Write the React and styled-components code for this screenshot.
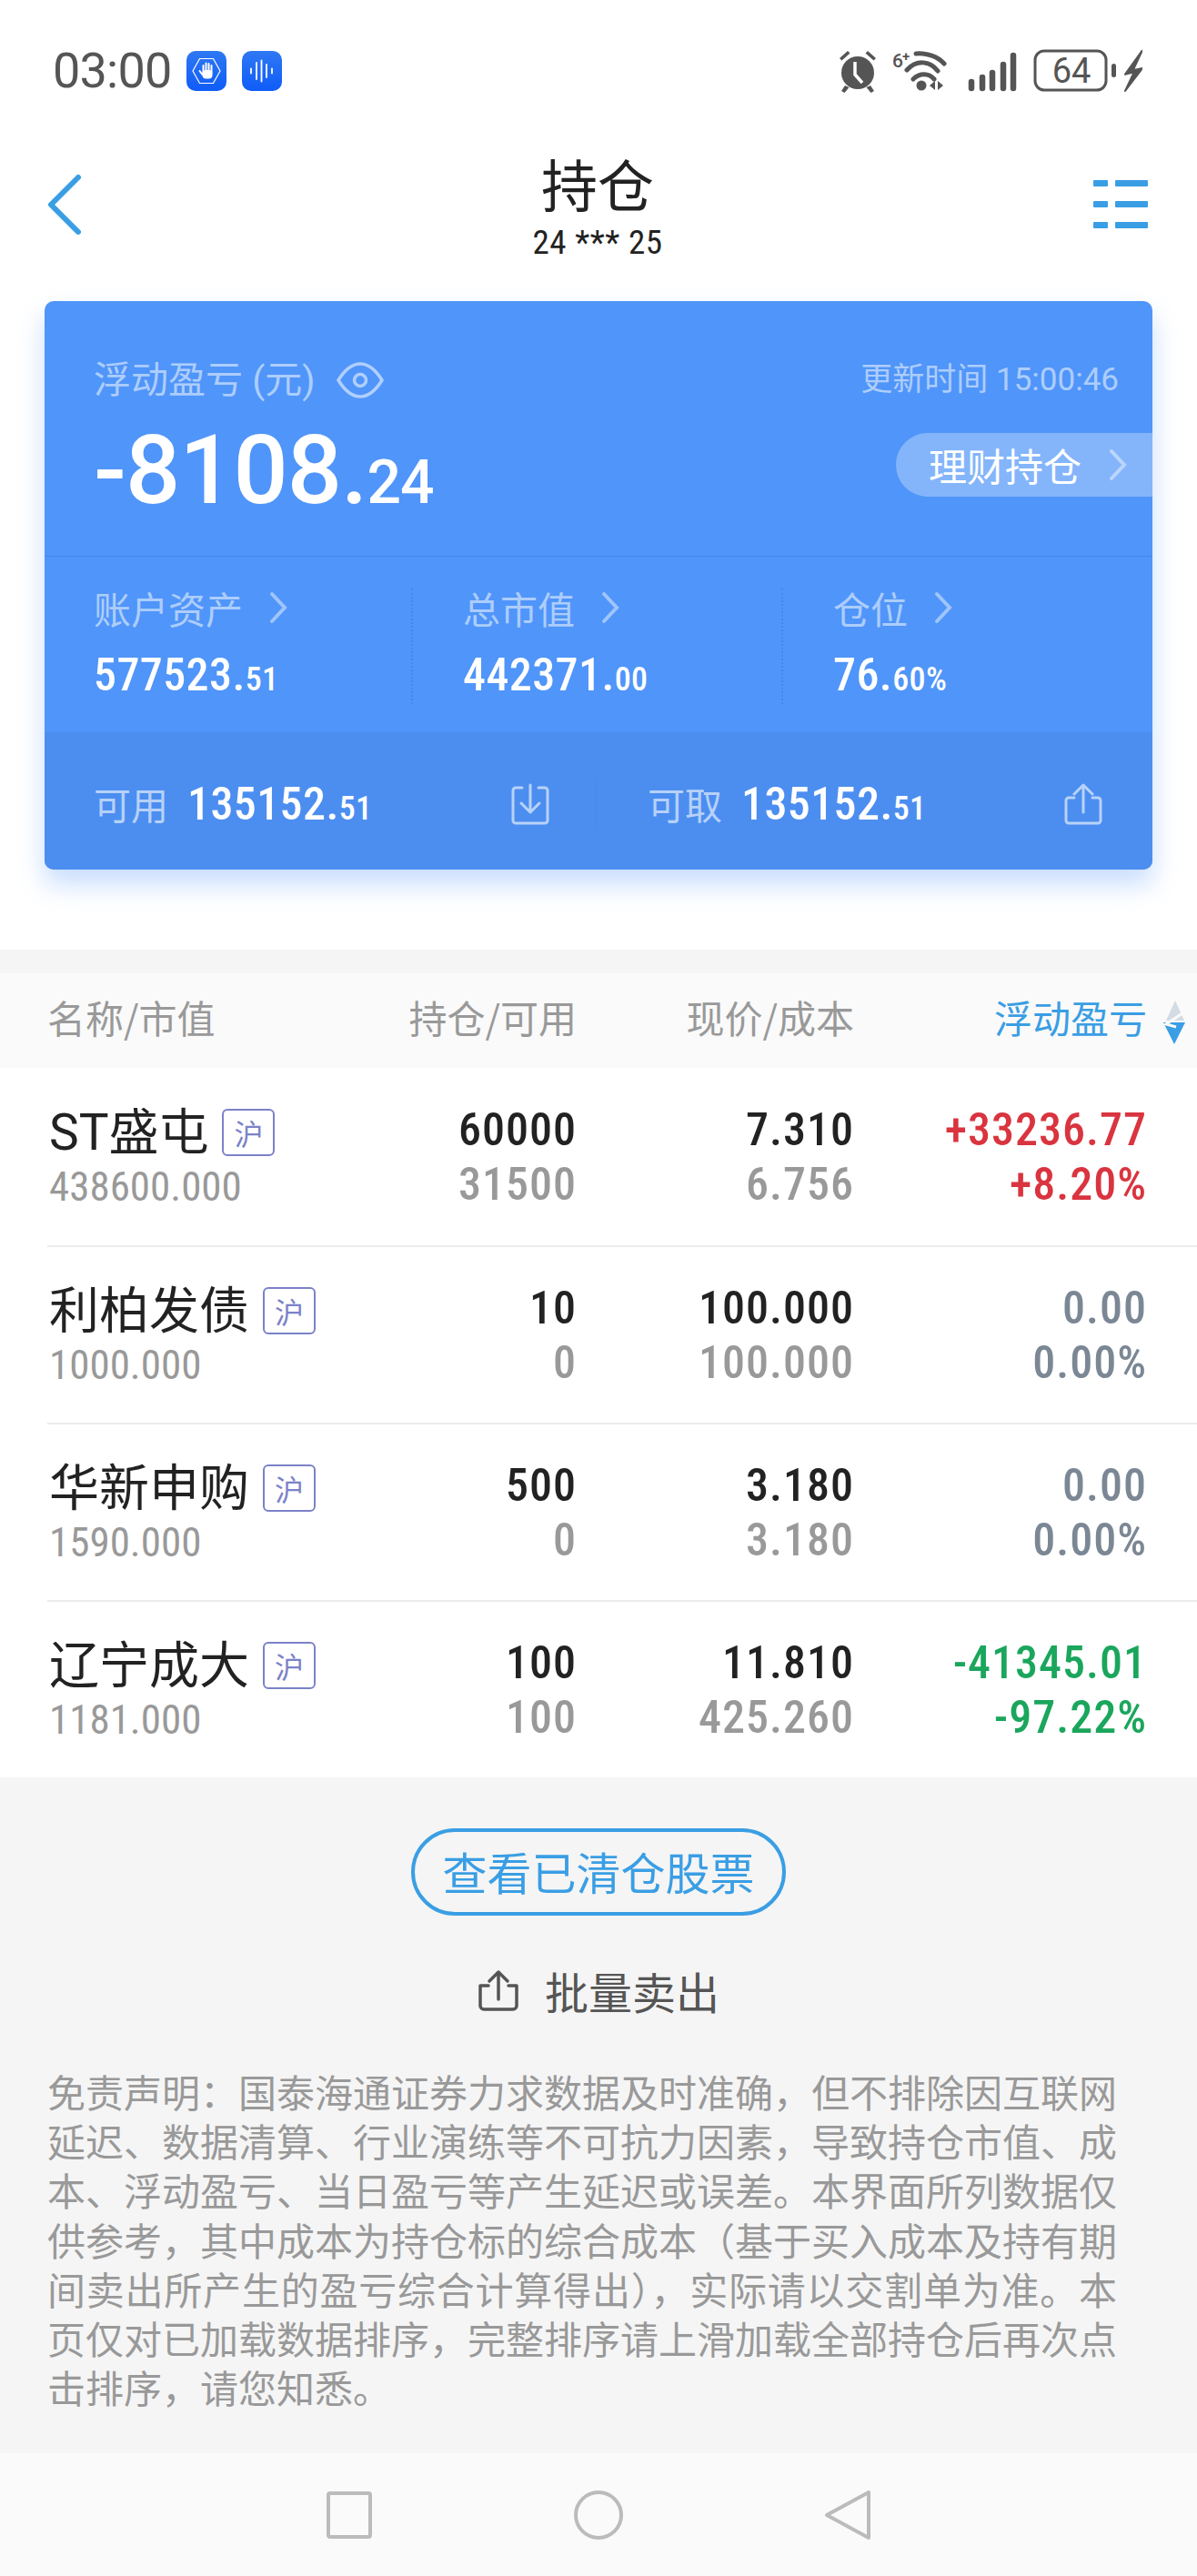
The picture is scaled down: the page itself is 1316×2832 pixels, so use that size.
import React from 'react';
import styled, { createGlobalStyle } from 'styled-components';

const CJK = '"Noto Sans CJK SC", sans-serif';
const NUM = 'Roboto, "Noto Sans CJK SC", sans-serif';
const BLUE = '#3a9ee4';

const Global = createGlobalStyle`
  html, body { margin: 0; padding: 0; background: #fff; }
  * { box-sizing: border-box; }
  body { font-family: ${CJK}; }
`;

const Page = styled.div`
  width: 1316px;
  height: 2832px;
  display: flex;
  flex-direction: column;
  background: #fff;
  overflow: hidden;
`;

const StatusBar = styled.div`
  height: 156px;
  padding: 0 58px 0 58px;
  display: flex;
  align-items: center;
  justify-content: space-between;
`;
const StatusLeft = styled.div`
  display: flex;
  align-items: center;
  gap: 17px;
`;
const Clock = styled.span`
  font: 400 54px/1 ${NUM};
  letter-spacing: -0.8px;
  color: #555;
`;
const AppBadge = styled.svg`
  width: 44px;
  height: 44px;
  display: block;
`;
const StatusRight = styled.div`
  display: flex;
  align-items: center;
  margin-right: 2px;
`;
const StatusIcons = styled.svg`
  width: 340px;
  height: 62px;
  display: block;
`;

const NavBar = styled.div`
  height: 175px;
  padding: 0 54px 0 52px;
  display: grid;
  grid-template-columns: 120px 1fr 120px;
`;
const BackIcon = styled.svg`
  width: 40px;
  height: 68px;
  margin-top: 35px;
`;
const MenuIcon = styled.svg`
  width: 60px;
  height: 54px;
  margin-top: 42px;
  justify-self: end;
`;
const TitleBlock = styled.div`
  display: flex;
  flex-direction: column;
  align-items: center;
  padding-top: 10px;
`;
const Title = styled.div`
  font: 400 62px/70px ${CJK};
  color: #222;
`;
const SubTitle = styled.div`
  font: 400 37px/36px ${NUM};
  font-stretch: 85%;
  letter-spacing: 0.6px;
  color: #222;
  margin-top: 13px;
`;

const Card = styled.section`
  margin: 0 49px;
  height: 625px;
  border-radius: 10px;
  background: #5095f9;
  box-shadow: 0 16px 28px rgba(80, 148, 248, 0.32);
  display: flex;
  flex-direction: column;
  overflow: hidden;
`;
const CardTop = styled.div`
  flex: none;
  height: 281px;
  padding: 60px 0 0 54px;
  border-bottom: 1px solid rgba(60, 120, 225, 0.55);
  display: flex;
  flex-direction: column;
`;
const CardHead = styled.div`
  display: flex;
  align-items: center;
  justify-content: space-between;
  height: 54px;
  padding-right: 37px;
`;
const CardLabel = styled.div`
  display: flex;
  align-items: center;
  gap: 24px;
  font: 400 41px/54px ${NUM};
  color: rgba(255, 255, 255, 0.55);
`;
const UpdatedAt = styled.div`
  font: 400 35px/54px ${NUM};
  color: rgba(255, 255, 255, 0.55);
`;
const Balance = styled.div`
  display: flex;
  align-items: center;
  justify-content: space-between;
  margin-top: 22px;
`;
const BalanceValue = styled.div`
  font: 500 106px/100px ${NUM};
  color: #fff;
  letter-spacing: -1px;
  span { font-size: 66px; font-weight: 500; letter-spacing: -1px; }
`;
const Pill = styled.div`
  width: 282px;
  height: 70px;
  margin-top: -26px;
  border-radius: 35px 0 0 35px;
  background: rgba(255, 255, 255, 0.3);
  display: flex;
  align-items: center;
  gap: 30px;
  padding-left: 36px;
  font: 400 42px/1 ${CJK};
  color: #fff;
`;

const Stats = styled.div`
  flex: 1;
  min-height: 0;
  display: grid;
  grid-template-columns: 405px 407px 1fr;
  padding: 35px 0 36px 0;
`;
const Stat = styled.div`
  padding-left: ${p => (p.$first ? '54px' : '55px')};
  border-right: ${p => (p.$last ? 'none' : '2px dotted rgba(60, 120, 225, 0.5)')};
  display: flex;
  flex-direction: column;
`;
const StatLabel = styled.div`
  margin-top: -4px;
  display: flex;
  align-items: center;
  gap: 29px;
  font: 400 41px/50px ${CJK};
  color: rgba(255, 255, 255, 0.55);
`;
const StatValue = styled.div`
  margin-top: 22px;
  font: 500 50px/54px ${NUM};
  font-stretch: 87%;
  letter-spacing: 0.4px;
  color: #fff;
  span { font-size: 36px; }
`;

const CardFoot = styled.div`
  flex: none;
  height: 151px;
  background: #4c8ef0;
  display: grid;
  grid-template-columns: 607px 1fr;
  align-items: center;
`;
const FootCell = styled.div`
  height: 60px;
  margin-top: 6px;
  padding: 0 ${p => (p.$right ? '54px' : '50px')} 0 ${p => (p.$right ? '56px' : '54px')};
  display: flex;
  align-items: center;
  border-right: ${p => (p.$right ? 'none' : '1px solid rgba(70, 130, 230, 0.6)')};
`;
const FootLabel = styled.span`
  font: 400 41px/1 ${CJK};
  color: rgba(255, 255, 255, 0.6);
  margin-right: 21px;
`;
const FootValue = styled.span`
  font: 500 50px/1 ${NUM};
  font-stretch: 87%;
  letter-spacing: 0.4px;
  color: #fff;
  flex: 1;
  span { font-size: 36px; }
`;
const FootIcon = styled.svg`
  width: 44px;
  height: 46px;
  display: block;
`;

const Strip = styled.div`
  height: 26px;
  margin-top: 88px;
  background: #f5f5f5;
`;

const TableHead = styled.div`
  height: 104px;
  background: #fafafa;
  padding: 0 55px 8px 52px;
  display: grid;
  grid-template-columns: 382px 200px 305px 322px;
  align-items: center;
  position: relative;
`;
const HeadCell = styled.div`
  font: 400 42px/1 ${CJK};
  color: ${p => (p.$active ? BLUE : '#999')};
  text-align: ${p => (p.$left ? 'left' : 'right')};
`;
const SortIcon = styled.svg`
  position: absolute;
  left: 1276px;
  top: 30px;
  width: 30px;
  height: 48px;
`;

const Rows = styled.div`
  display: flex;
  flex-direction: column;
`;
const Row = styled.div`
  height: 195px;
  margin-left: 52px;
  padding-right: 55px;
  border-top: ${p => (p.$first ? 'none' : '2px solid #ececec')};
  display: grid;
  grid-template-columns: 382px 200px 305px 322px;
  align-content: center;
`;
const NameCell = styled.div`
  display: flex;
  flex-direction: column;
  padding: 6px 0 0 2px;
`;
const NameLine = styled.div`
  display: flex;
  align-items: center;
  gap: 15px;
  height: 60px;
`;
const StockName = styled.span`
  font: 400 55px/60px ${NUM};
  color: #222;
`;
const MarketTag = styled.span`
  width: 58px;
  height: 52px;
  border: 2px solid #7b82c8;
  border-radius: 6px;
  color: #7b82c8;
  font: 400 32px/48px ${CJK};
  text-align: center;
`;
const MarketValue = styled.span`
  font: 400 45px/60px ${NUM};
  font-stretch: 84%;
  color: #999;
`;
const NumCell = styled.div`
  display: flex;
  flex-direction: column;
  padding-top: 3px;
  text-align: right;
`;
const Top = styled.span`
  font: 470 50px/60px ${NUM};
  font-stretch: 87%;
  letter-spacing: 1px;
  color: ${p => p.$color || '#222'};
`;
const Bottom = styled.span`
  font: 470 50px/60px ${NUM};
  font-stretch: 87%;
  letter-spacing: 1px;
  color: ${p => p.$color || '#999'};
`;

const Footer = styled.div`
  flex: 1;
  background: #f5f5f5;
  display: flex;
  flex-direction: column;
  align-items: center;
  padding-top: 56px;
`;
const OutlineButton = styled.div`
  width: 412px;
  height: 96px;
  padding-bottom: 4px;
  border: 4px solid ${BLUE};
  border-radius: 48px;
  display: flex;
  align-items: center;
  justify-content: center;
  font: 400 49px/1 ${CJK};
  color: ${BLUE};
`;
const BatchSell = styled.div`
  margin-top: 47px;
  display: flex;
  align-items: center;
  gap: 28px;
  font: 400 48px/70px ${CJK};
  color: #555;
`;
const BatchIcon = styled.svg`
  width: 46px;
  height: 46px;
`;
const Disclaimer = styled.p`
  margin: 49px 0 0 52px;
  align-self: flex-start;
  width: 1176px;
  font: 400 42px/54.2px ${CJK};
  color: #999;
  text-align: justify;
`;

const SystemBar = styled.div`
  height: 135px;
  background: #fafafa;
  display: flex;
  align-items: center;
  justify-content: center;
  gap: 220px;
`;
const SysIcon = styled.svg`
  width: 54px;
  height: 56px;
  display: block;
`;

/* Status bar drawings */
const HandBadge = () => (
  <AppBadge viewBox="0 0 44 44">
    <defs>
      <linearGradient id="badgeFill" x1="0" y1="0" x2="0" y2="1">
        <stop offset="0" stopColor="#2f78f4" /><stop offset="1" stopColor="#0f5cf8" />
      </linearGradient>
    </defs>
    <rect width="44" height="44" rx="10" fill="url(#badgeFill)" />
    <path d="M14.500 8.500h15L37 22l-7.500 13.500h-15L7 22z" fill="none" stroke="#fff" strokeWidth="1.200" />
    <g stroke="#fff" strokeWidth="2" strokeLinecap="round">
      <path d="M18.500 16v8M21.500 13.500v9M24.500 14v9M27.500 16v8M14.500 22l3 4" />
    </g>
    <rect x="17.500" y="21" width="11" height="9.500" rx="4" fill="#fff" />
  </AppBadge>
);

const WaveBadge = () => (
  <AppBadge viewBox="0 0 44 44">
    <rect width="44" height="44" rx="10" fill="url(#badgeFill)" />
    <g stroke="#fff" strokeWidth="1.800" strokeLinecap="round">
      <path d="M10 19.500v5M16 13v18M21.500 10.500v23M27 15v14M33 19.500v5" />
    </g>
  </AppBadge>
);

const TrayIcons = () => (
  <StatusIcons viewBox="0 -6 340 62">
    <g fill="#555">
      <circle cx="27" cy="27" r="18" />
      <path d="M7 11l9-8 2.500 2.500-9 8zM47 11l-9-8-2.500 2.500 9 8zM13 41l-4 6 3.500 2 5-6zM41 41l4 6-3.500 2-5-6z" />
    </g>
    <path d="M24 15v14l8 9" stroke="#fff" strokeWidth="3.500" fill="none" />
    <text x="65" y="21" fontFamily="Roboto, sans-serif" fontSize="21" fontWeight="500" fill="#555">6</text>
    <text x="76" y="14" fontFamily="Roboto, sans-serif" fontSize="15" fontWeight="700" fill="#555">+</text>
    <g fill="none" stroke="#555" strokeWidth="5" strokeLinecap="round">
      <path d="M91 6c12-1 24 3 31 11" />
      <path d="M81 24c10-11 25-11 34 1" />
      <path d="M88 34c7-7 17-7 23 0" />
    </g>
    <circle cx="97" cy="41" r="5.500" fill="#555" />
    <path d="M106 41l6-5v10zM115 36v10l6-5z" fill="#555" />
    <g stroke="#555" strokeWidth="6.500" strokeLinecap="round">
      <path d="M152 37v7M164 32v12M175 27v17M187 18v26M198 8v36" />
    </g>
    <rect x="222" y="3" width="78" height="43" rx="10" fill="none" stroke="#555" strokeWidth="3" />
    <text x="262" y="38" textAnchor="middle" fontFamily="Roboto, sans-serif" fontSize="38" fill="#555">64</text>
    <rect x="306" y="17" width="5" height="15" rx="2.500" fill="#555" />
    <path d="M339.700 2.700L321 28.700l9.700-2.400L321 47l19-25-10.300 2.300z" fill="#555" stroke="#555" strokeWidth="2" strokeLinejoin="round" />
  </StatusIcons>
);

const Eye = () => (
  <svg width="52" height="40" viewBox="0 0 52 40" fill="none" stroke="rgba(255,255,255,.55)" strokeWidth="3.500">
    <path d="M2 20C10 7 18 2 26 2s16 5 24 18c-8 13-16 18-24 18S10 33 2 20z" />
    <circle cx="26" cy="20" r="6.500" />
  </svg>
);

const Chevron = ({ opacity = 0.45 }) => (
  <svg width="20" height="36" viewBox="0 0 20 36" fill="none" stroke={`rgba(255,255,255,${opacity})`} strokeWidth="4" strokeLinecap="round">
    <path d="M3 3l14 15L3 33" />
  </svg>
);

const DownloadGlyph = () => (
  <FootIcon viewBox="0 0 44 46" fill="none" stroke="rgba(255,255,255,.6)" strokeWidth="3" strokeLinecap="round" strokeLinejoin="round">
    <path d="M13 5H6a3 3 0 0 0-3 3v33a3 3 0 0 0 3 3h32a3 3 0 0 0 3-3V8a3 3 0 0 0-3-3h-7" />
    <path d="M22 2v29M12 22l10 10 10-10" />
  </FootIcon>
);

const UploadGlyph = () => (
  <FootIcon viewBox="0 0 44 46" fill="none" stroke="rgba(255,255,255,.6)" strokeWidth="3" strokeLinecap="round" strokeLinejoin="round">
    <path d="M12 16H6a3 3 0 0 0-3 3v22a3 3 0 0 0 3 3h32a3 3 0 0 0 3-3V19a3 3 0 0 0-3-3h-6" />
    <path d="M22 32V3M12 12l10-10 10 10" />
  </FootIcon>
);

const holdings = [
  { name: 'ST盛屯', mv: '438600.000', qty: '60000', free: '31500', price: '7.310', cost: '6.756', pl: '+33236.77', pct: '+8.20%', color: '#d9343f' },
  { name: '利柏发债', mv: '1000.000', qty: '10', free: '0', price: '100.000', cost: '100.000', pl: '0.00', pct: '0.00%', color: '#7b8794' },
  { name: '华新申购', mv: '1590.000', qty: '500', free: '0', price: '3.180', cost: '3.180', pl: '0.00', pct: '0.00%', color: '#7b8794' },
  { name: '辽宁成大', mv: '1181.000', qty: '100', free: '100', price: '11.810', cost: '425.260', pl: '-41345.01', pct: '-97.22%', color: '#1aa65c' },
];

const stats = [
  { label: '账户资产', whole: '577523.', cents: '51' },
  { label: '总市值', whole: '442371.', cents: '00' },
  { label: '仓位', whole: '76.', cents: '60%' },
];

const NOTICE = '免责声明\uFF1A国泰海通证券力求数据及时准确\uFF0C但不排除因互联网延迟、数据清算、行业演练等不可抗力因素\uFF0C导致持仓市值、成本、浮动盈亏、当日盈亏等产生延迟或误差。本界面所列数据仅供参考\uFF0C其中成本为持仓标的综合成本\uFF08基于买入成本及持有期间卖出所产生的盈亏综合计算得出\uFF09\uFF0C实际请以交割单为准。本页仅对已加载数据排序\uFF0C完整排序请上滑加载全部持仓后再次点击排序\uFF0C请您知悉。';

export default function App() {
  return (
    <Page>
      <Global />
      <StatusBar>
        <StatusLeft>
          <Clock>03:00</Clock>
          <HandBadge />
          <WaveBadge />
        </StatusLeft>
        <StatusRight><TrayIcons /></StatusRight>
      </StatusBar>

      <NavBar>
        <BackIcon viewBox="0 0 40 68" fill="none" stroke={BLUE} strokeWidth="6" strokeLinecap="round" strokeLinejoin="round">
          <path d="M34 4L4 34l30 30" />
        </BackIcon>
        <TitleBlock>
          <Title>持仓</Title>
          <SubTitle>24 *** 25</SubTitle>
        </TitleBlock>
        <MenuIcon viewBox="0 0 60 54" fill={BLUE}>
          <rect x="0" y="0" width="16" height="7" rx="1" /><rect x="24" y="0" width="36" height="7" rx="1" />
          <rect x="0" y="23" width="16" height="7" rx="1" /><rect x="24" y="23" width="36" height="7" rx="1" />
          <rect x="0" y="46" width="16" height="7" rx="1" /><rect x="24" y="46" width="36" height="7" rx="1" />
        </MenuIcon>
      </NavBar>

      <Card>
        <CardTop>
          <CardHead>
            <CardLabel>浮动盈亏 (元)<Eye /></CardLabel>
            <UpdatedAt>更新时间 15:00:46</UpdatedAt>
          </CardHead>
          <Balance>
            <BalanceValue>-8108.<span>24</span></BalanceValue>
            <Pill>理财持仓<Chevron /></Pill>
          </Balance>
        </CardTop>
        <Stats>
          {stats.map((s, i) => (
            <Stat key={s.label} $first={i === 0} $last={i === 2}>
              <StatLabel>{s.label}<Chevron /></StatLabel>
              <StatValue>{s.whole}<span>{s.cents}</span></StatValue>
            </Stat>
          ))}
        </Stats>
        <CardFoot>
          <FootCell>
            <FootLabel>可用</FootLabel>
            <FootValue>135152.<span>51</span></FootValue>
            <DownloadGlyph />
          </FootCell>
          <FootCell $right>
            <FootLabel>可取</FootLabel>
            <FootValue>135152.<span>51</span></FootValue>
            <UploadGlyph />
          </FootCell>
        </CardFoot>
      </Card>

      <Strip />
      <TableHead>
        <HeadCell $left>名称/市值</HeadCell>
        <HeadCell>持仓/可用</HeadCell>
        <HeadCell>现价/成本</HeadCell>
        <HeadCell $active>浮动盈亏</HeadCell>
        <SortIcon viewBox="0 0 30 48">
          <path d="M16 0l10 22H6z" fill="#d3dbe4" />
          <path d="M15 48L3 24h24z" fill={BLUE} />
          <path d="M24 14L6 26l11 3" fill="none" stroke="#fafafa" strokeWidth="3" />
        </SortIcon>
      </TableHead>

      <Rows>
        {holdings.map((h, i) => (
          <Row key={h.name} $first={i === 0}>
            <NameCell>
              <NameLine>
                <StockName>{h.name}</StockName>
                <MarketTag>沪</MarketTag>
              </NameLine>
              <MarketValue>{h.mv}</MarketValue>
            </NameCell>
            <NumCell><Top>{h.qty}</Top><Bottom>{h.free}</Bottom></NumCell>
            <NumCell><Top>{h.price}</Top><Bottom>{h.cost}</Bottom></NumCell>
            <NumCell><Top $color={h.color}>{h.pl}</Top><Bottom $color={h.color}>{h.pct}</Bottom></NumCell>
          </Row>
        ))}
      </Rows>

      <Footer>
        <OutlineButton>查看已清仓股票</OutlineButton>
        <BatchSell>
          <BatchIcon viewBox="0 0 46 46" fill="none" stroke="#555" strokeWidth="3.500" strokeLinecap="round" strokeLinejoin="round">
            <path d="M12 18H3v22a4 4 0 0 0 4 4h32a4 4 0 0 0 4-4V18h-9" />
            <path d="M23 33V3M13 13L23 3l10 10" />
          </BatchIcon>
          批量卖出
        </BatchSell>
        <Disclaimer>{NOTICE}</Disclaimer>
      </Footer>

      <SystemBar>
        <SysIcon viewBox="0 0 54 56" fill="none" stroke="#bbb" strokeWidth="4" strokeLinejoin="round">
          <rect x="4" y="4" width="46" height="48" rx="2" />
        </SysIcon>
        <SysIcon viewBox="0 0 54 56" fill="none" stroke="#bbb" strokeWidth="4">
          <circle cx="27" cy="28" r="25" />
        </SysIcon>
        <SysIcon viewBox="0 0 54 56" fill="none" stroke="#bbb" strokeWidth="4" strokeLinejoin="round">
          <path d="M50 3v50L4 28z" />
        </SysIcon>
      </SystemBar>
    </Page>
  );
}
